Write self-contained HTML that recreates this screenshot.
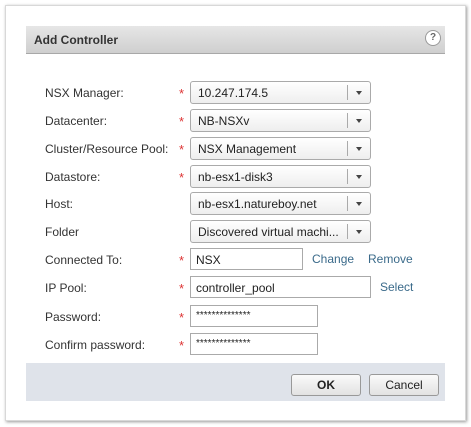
<html><head><style>
body{margin:0;width:471px;height:427px;background:#fff;font-family:"Liberation Sans",sans-serif;font-size:12px;color:#333;position:relative;overflow:hidden}
.dlg{position:absolute;left:5px;top:5px;width:459px;height:414px;background:#fff;border:1px solid #d8d8d8;box-shadow:1px 1px 3px #999}
.hdr{position:absolute;left:26px;top:26px;width:419px;height:27px;background:linear-gradient(#e6e6e6,#cfcfcf);border-bottom:1px solid #a8a8a8}
.hdr b{position:absolute;left:8px;top:7px;font-size:12px;color:#333}
.help{position:absolute;right:4px;top:4px;width:14px;height:14px;border-radius:50%;border:1px solid #999;background:#fff;font-size:10px;text-align:center;line-height:14px;color:#666;font-weight:bold}
.lbl{position:absolute;left:45px}
.ast{position:absolute;left:179px;color:#d33;font-size:13px}
.dd{position:absolute;left:190px;width:179px;height:21px;border:1px solid #aaa;border-radius:3px;background:linear-gradient(#fff,#eee)}
.dd span{position:absolute;left:7px;top:4px;color:#222}
.dd i{position:absolute;right:0;top:3px;width:22px;height:15px;border-left:1px solid #aaa}
.dd i:after{content:"";position:absolute;left:8px;top:6px;border:3px solid transparent;border-top:4px solid #444}
.tx{position:absolute;left:190px;height:20px;border:1px solid #aaa;background:#fff}
.tx span{position:absolute;left:5px;top:4px;color:#222}
.lnk{position:absolute;color:#3a6a8a}
.ftr{position:absolute;left:26px;top:363px;width:419px;height:38px;background:#dfe3ea}
.btn{position:absolute;top:374px;width:68px;height:20px;border:1px solid #999;border-radius:3px;background:linear-gradient(#fafafa,#e2e2e2);text-align:center;line-height:20px;color:#222}
</style></head><body>
<div class="dlg"></div>
<div class="hdr"><b>Add Controller</b><div class="help">?</div></div>
<div class="lbl" style="top:86px">NSX Manager:</div><div class="ast" style="top:86px">*</div><div class="dd" style="top:81px"><span>10.247.174.5</span><i></i></div>
<div class="lbl" style="top:114px">Datacenter:</div><div class="ast" style="top:114px">*</div><div class="dd" style="top:109px"><span>NB-NSXv</span><i></i></div>
<div class="lbl" style="top:142px">Cluster/Resource Pool:</div><div class="ast" style="top:142px">*</div><div class="dd" style="top:137px"><span>NSX Management</span><i></i></div>
<div class="lbl" style="top:170px">Datastore:</div><div class="ast" style="top:170px">*</div><div class="dd" style="top:165px"><span>nb-esx1-disk3</span><i></i></div>
<div class="lbl" style="top:197px">Host:</div><div class="dd" style="top:192px"><span>nb-esx1.natureboy.net</span><i></i></div>
<div class="lbl" style="top:225px">Folder</div><div class="dd" style="top:220px"><span>Discovered virtual machi...</span><i></i></div>
<div class="lbl" style="top:253px">Connected To:</div><div class="ast" style="top:253px">*</div><div class="tx" style="top:248px;width:111px"><span>NSX</span></div><div class="lnk" style="left:312px;top:252px">Change</div><div class="lnk" style="left:368px;top:252px">Remove</div>
<div class="lbl" style="top:281px">IP Pool:</div><div class="ast" style="top:281px">*</div><div class="tx" style="top:276px;width:179px"><span>controller_pool</span></div><div class="lnk" style="left:380px;top:280px">Select</div>
<div class="lbl" style="top:310px">Password:</div><div class="ast" style="top:310px">*</div><div class="tx" style="top:305px;width:126px"><span style="font-size:10px">**************</span></div>
<div class="lbl" style="top:338px">Confirm password:</div><div class="ast" style="top:338px">*</div><div class="tx" style="top:333px;width:126px"><span style="font-size:10px">**************</span></div>
<div class="ftr"></div>
<div class="btn" style="left:291px;font-weight:bold">OK</div>
<div class="btn" style="left:369px">Cancel</div>
</body></html>
